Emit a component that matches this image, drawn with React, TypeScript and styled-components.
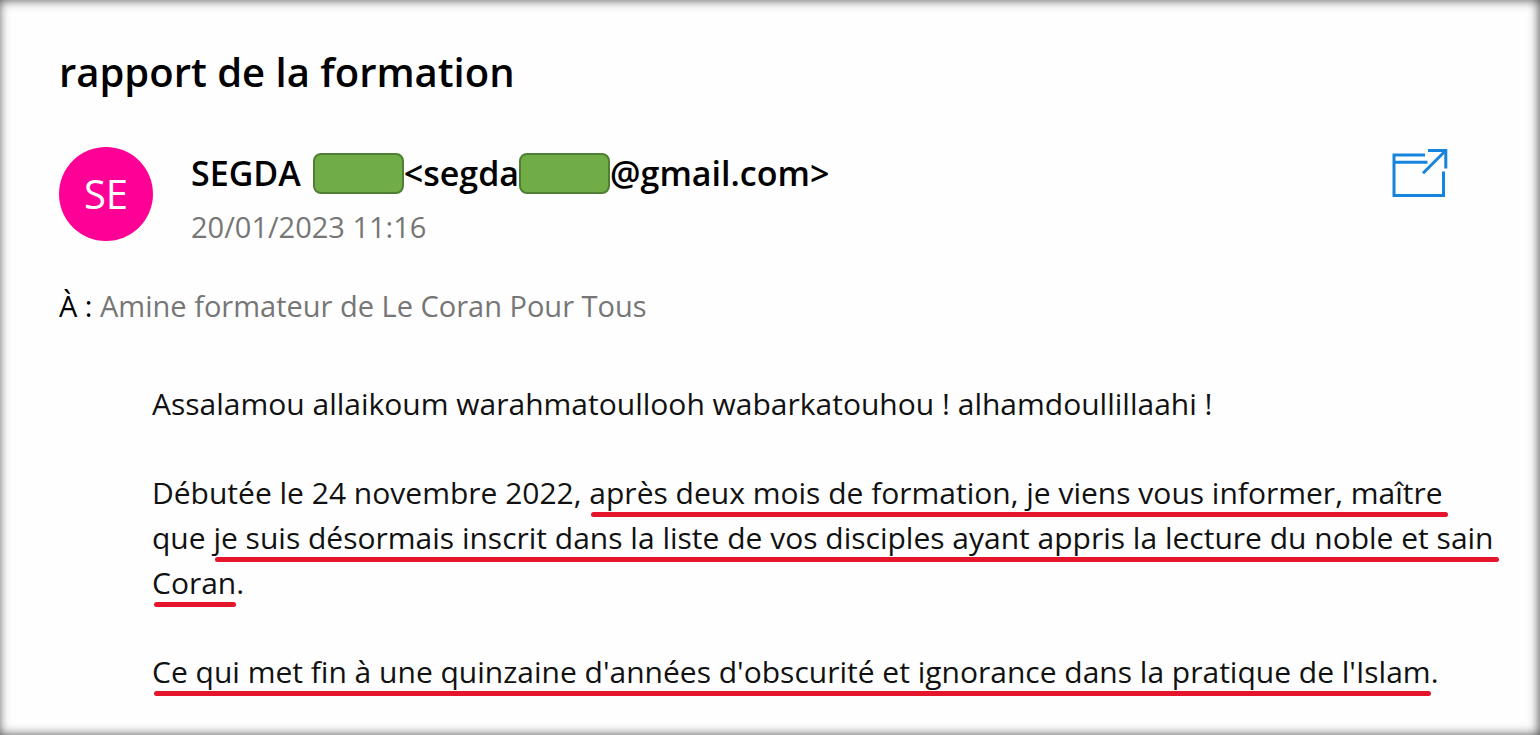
import React from "react";
import styled, { createGlobalStyle } from "styled-components";

const GlobalStyle = createGlobalStyle`
  * { box-sizing: border-box; }
  body { margin: 0; background: #fff; }
`;

const Message = styled.main`
  min-height: 100vh;
  padding: 44px 24px 32px 59px;
  background: #fefefe;
  box-shadow: inset -1px 0 11px 0 rgba(0, 0, 0, 0.7);
  color: #000;
  font-family: "Open Sans", "Noto Sans", sans-serif;
`;

const Subject = styled.h1`
  margin: 0 0 47px;
  font-size: 40px;
  line-height: 56px;
  font-weight: 600;
  white-space: nowrap;
`;

const Header = styled.header`
  display: flex;
  align-items: flex-start;
  padding-right: 68px;
`;

const Avatar = styled.div`
  display: flex;
  align-items: center;
  justify-content: center;
  flex: none;
  width: 94px;
  height: 94px;
  margin-right: 38px;
  border-radius: 50%;
  background: #ff0097;
  color: #fff;
  font-size: 40px;
  line-height: 48px;
`;

const Sender = styled.div`
  flex: 1;
  padding-top: 4px;
`;

const Address = styled.div`
  display: flex;
  align-items: center;
  height: 44px;
  font-size: 34px;
  line-height: 44px;
  font-weight: 600;
  white-space: nowrap;
`;

const Name = styled.span`
  margin-right: 12px;
`;

const Redaction = styled.span`
  flex: none;
  width: 91px;
  height: 41px;
  border: 2px solid #507e32;
  border-radius: 8px;
  background: #70ad47;
`;

const DateLine = styled.time`
  display: block;
  margin-top: 12px;
  color: #767676;
  font-size: 29px;
  line-height: 40px;
`;

const OpenButton = styled.button`
  flex: none;
  width: 56px;
  height: 50px;
  margin-top: 1px;
  padding: 0;
  border: 0;
  background: none;
  cursor: pointer;

  svg { display: block; }
`;

const Recipients = styled.p`
  margin: 37px 0 0;
  font-size: 29px;
  line-height: 44px;
  color: #767676;
`;

const Label = styled.span`
  color: #000;
`;

const Body = styled.section`
  padding: 53px 0 0 93px;
  font-size: 30px;
  line-height: 45px;
  color: #111;
`;

const Paragraph = styled.p`
  margin: 0 0 44px;
  white-space: nowrap;

  &:last-child { margin-bottom: 0; }
`;

const Marked = styled.span<{ $overhang?: number }>`
  position: relative;

  &::after {
    content: "";
    position: absolute;
    left: 2px;
    right: ${(p) => -(p.$overhang ?? 0)}px;
    bottom: -4px;
    height: 5px;
    border-radius: 3px;
    background: #e5152b;
  }
`;

export default function App() {
  return (
    <>
      <GlobalStyle />
      <Message>
        <Subject>rapport de la formation</Subject>
        <Header>
          <Avatar>SE</Avatar>
          <Sender>
            <Address>
              <Name>SEGDA</Name>
              <Redaction />
              <span>&lt;segda</span>
              <Redaction />
              <span>@gmail.com&gt;</span>
            </Address>
            <DateLine dateTime="2023-01-20T11:16">20/01/2023 11:16</DateLine>
          </Sender>
          <OpenButton type="button" aria-label="Ouvrir dans une nouvelle fenêtre">
            <svg width="56" height="50" viewBox="0 0 56 50" fill="none" stroke="#1683dc" strokeWidth="3">
              <path d="M33 7H2V47.500H51.500V23.500" />
              <path d="M2 14.200H35.500" />
              <path d="M36 2.500H53.800V20.500" />
              <path d="M53.500 2.800L31 25.200" />
            </svg>
          </OpenButton>
        </Header>
        <Recipients>
          <Label>À :</Label> Amine formateur de Le Coran Pour Tous
        </Recipients>
        <Body>
          <Paragraph>Assalamou allaikoum warahmatoullooh wabarkatouhou ! alhamdoullillaahi !</Paragraph>
          <Paragraph>
            Débutée le 24 novembre 2022,{" "}
            <Marked $overhang={5}>après deux mois de formation, je viens vous informer, maître</Marked>
            <br />
            que{" "}
            <Marked $overhang={5}>
              je suis désormais inscrit dans la liste de vos disciples ayant appris la lecture du noble et sain
            </Marked>
            <br />
            <Marked>Coran</Marked>.
          </Paragraph>
          <Paragraph>
            <Marked>Ce qui met fin à une quinzaine d'années d'obscurité et ignorance dans la pratique de l'Islam</Marked>.
          </Paragraph>
        </Body>
      </Message>
    </>
  );
}
